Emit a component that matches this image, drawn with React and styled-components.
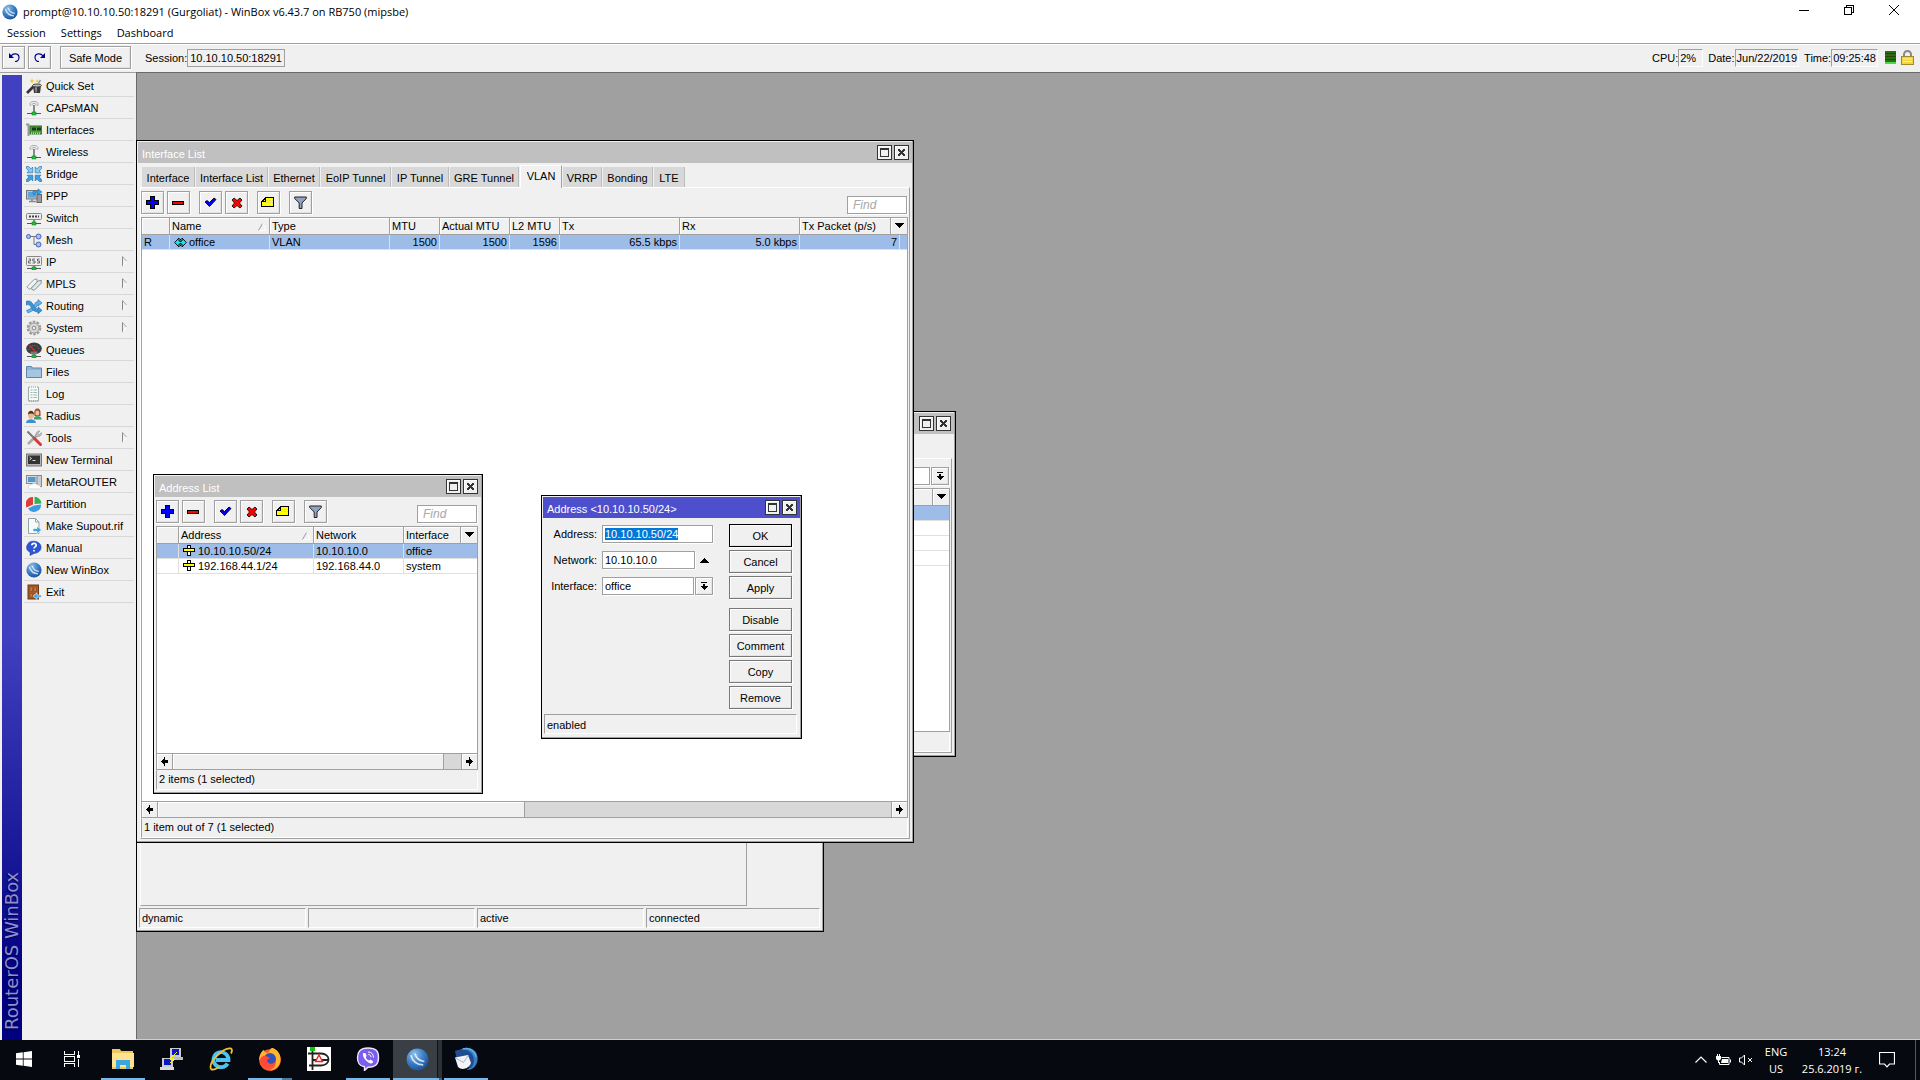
import React, { useEffect, useRef } from "react";
import styled, { createGlobalStyle, css } from "styled-components";

const ui = '"Liberation Sans", Arial, sans-serif';
const shell = '"Open Sans", "Segoe UI", sans-serif';
const c = {
  face: "#f0f0f0",
  edge: "#a0a0a0",
  grid: "#e0e0e0",
  select: "#9dbde8",
  tab: "#d8d8d8",
  desk: "#a0a0a0",
};

const Global = createGlobalStyle`
  *, *::before, *::after { box-sizing: border-box; }
  body { margin: 0; background: ${c.face}; overflow: hidden; }
  button, input, select { font: inherit; color: inherit; margin: 0; border-radius: 0; }
  button { background: none; border: 0; padding: 0; cursor: default; }
  svg { display: block; flex: none; }
  ::selection { background: #0078d7; color: #fff; }
`;

const Screen = styled.div`
  display: flex;
  flex-direction: column;
  height: 100vh;
  font: 11px/14px ${ui};
  color: #000;
  background: ${c.face};
  user-select: none;
`;

/* ---------- application frame ---------- */

const AppTitle = styled.header`
  display: flex;
  align-items: center;
  height: 23px;
  padding: 0 4px 0 2px;
  background: #fff;
  font: 11px/16px ${shell};
`;
const AppName = styled.h1`
  flex: 1;
  margin: 0 0 0 5px;
  font: inherit;
`;
const WinControl = styled.button`
  display: flex;
  align-items: center;
  justify-content: center;
  align-self: flex-start;
  width: 45px;
  height: 20px;
`;
const MenuBar = styled.nav`
  display: flex;
  gap: 15px;
  height: 21px;
  padding: 0 7px;
  background: #fff;
  border-bottom: 1px solid ${c.edge};
  font: 11px/20px ${shell};
`;
const bevel = css`
  background: ${c.face};
  border: 1px solid ${c.edge};
  box-shadow: 1px 1px 0 #fff, inset 1px 1px 0 #fff, inset -1px -1px 0 #e3e3e3;
`;
const MainBar = styled.div`
  display: flex;
  align-items: center;
  height: 28px;
  padding: 0 6px 2px 2px;
  border-top: 1px solid #fff;
`;
const Tool = styled.button`
  ${bevel}
  display: flex;
  align-items: center;
  justify-content: center;
  flex: none;
  width: 23px;
  height: 23px;
  margin-right: ${(p) => (p.$wide ? 9 : 3)}px;
`;
const TextTool = styled(Tool)`
  width: 71px;
  margin-right: 14px;
`;
const Readout = styled.output`
  height: 18px;
  padding: 0 ${(p) => (p.$boxed ? 2 : 1)}px;
  min-width: ${(p) => p.$min || 0}px;
  margin-right: ${(p) => (p.$boxed ? 0 : 5)}px;
  line-height: 17px;
  border: 1px solid ${c.edge};
  border-right-color: ${(p) => (p.$boxed ? c.edge : "#fff")};
  border-bottom-color: ${(p) => (p.$boxed ? c.edge : "#fff")};
`;
const Spacer = styled.div`
  flex: 1;
`;
const LoadMeter = styled.div`
  width: 11px;
  height: 13px;
  margin: 0 5px 0 2px;
  background: repeating-linear-gradient(#2d6b12 0 2px, #1f4a0c 2px 3px);
  border-bottom: 2px solid #3fe03f;
`;
const Work = styled.div`
  display: flex;
  flex: 1;
  min-height: 0;
`;
const Side = styled.aside`
  display: flex;
  width: 136px;
  padding: 2px 2px 0;
  border-top: 1px solid ${c.edge};
`;
const Brand = styled.div`
  width: 20px;
  padding-top: 10px;
  color: #8f8fca;
  font: 18px/20px "DejaVu Sans", Verdana, sans-serif;
  text-shadow: -1px -1px 1px #00004c;
  white-space: nowrap;
  writing-mode: vertical-rl;
  transform: rotate(180deg);
  background: linear-gradient(#000080 6%, #4040c0 42%);
`;
const SideMenu = styled.nav`
  flex: 1;
  padding-left: 2px;
`;
const SideItem = styled.button`
  display: flex;
  align-items: center;
  gap: 4px;
  width: 100%;
  height: 22px;
  padding: 0 6px 0 2px;
  border-bottom: 1px solid #d8d8d8;
  text-align: left;
  span { flex: 1; }
`;
const Desk = styled.main`
  position: relative;
  flex: 1;
  overflow: hidden;
  background: ${c.desk};
  border-bottom: 1px solid #d0d0d0;
  box-shadow: inset 1px 1px 0 #696969;
`;

/* ---------- inner windows ---------- */

const Win = styled.section`
  position: absolute;
  left: ${(p) => p.$x}px;
  top: ${(p) => p.$y}px;
  width: ${(p) => p.$w}px;
  height: ${(p) => p.$h}px;
  display: flex;
  flex-direction: column;
  padding: 1px;
  border: 1px solid #000;
  background: ${c.face};
  box-shadow: inset -1px -1px 0 ${c.edge};
`;
const WinTitle = styled.div`
  display: flex;
  align-items: center;
  gap: 2px;
  height: 21px;
  flex: none;
  padding: 0 3px 0 4px;
  background: ${(p) => (p.$active ? "#4d4fcc" : "#c0c0c0")};
  color: #fff;
  h2 { flex: 1; margin: 0; font: inherit; padding-top: 2px; }
`;
const Caption = styled.button`
  display: flex;
  align-items: center;
  justify-content: center;
  width: 15px;
  height: 15px;
  background: ${c.face};
  border: 1px solid #333;
  box-shadow: inset 1px 1px 0 #fff;
`;
const Body = styled.div`
  display: flex;
  flex-direction: column;
  flex: 1;
  min-height: 0;
  margin: ${(p) => (p.$plain ? "0 3px 2px 1px" : "0 2px 2px")};
`;
const Tabs = styled.div`
  display: flex;
  align-items: flex-end;
  gap: 1px;
  flex: none;
  height: 24px;
  padding-left: 2px;
`;
const Tab = styled.button`
  width: ${(p) => p.$w}px;
  height: 20px;
  padding-top: 2px;
  background: ${c.tab};
  border-right: 1px solid #bcbcbc;
  white-space: nowrap;
  &[aria-selected="true"] {
    position: relative;
    height: 23px;
    margin-bottom: -1px;
    padding: 0 0 2px;
    background: ${c.face};
    border: 1px solid #fff;
    border-right-color: ${c.edge};
    border-bottom: 0;
  }
`;
const Panel = styled.div`
  display: flex;
  flex-direction: column;
  flex: 1;
  min-height: 0;
  padding-right: 1px;
  border: 1px solid #fff;
  border-right-color: ${c.edge};
  border-bottom-color: ${c.edge};
`;
const Strip = styled.div`
  display: flex;
  flex: none;
  height: 29px;
  padding: 3px 1px 3px 0;
  align-items: flex-end;
`;
const field = css`
  height: 18px;
  padding: 0 2px;
  background: #fff;
  border: 1px solid ${c.edge};
  box-shadow: 1px 1px 0 #fff;
  outline: 0;
  appearance: none;
`;
const Find = styled.input`
  ${field}
  width: 60px;
  padding-left: 5px;
  font-size: 12px;
  &::placeholder { color: #a8a8a8; font-style: italic; opacity: 1; }
`;
const ListBox = styled.div`
  position: relative;
  flex: 1;
  min-height: 0;
  overflow: hidden;
  background: #fff;
  border: 1px solid ${c.edge};
  border-bottom-width: ${(p) => (p.$closed ? 1 : 0)}px;
`;
const ColumnPicker = styled.button`
  position: absolute;
  top: 0;
  right: 0;
  display: flex;
  align-items: center;
  justify-content: center;
  width: 17px;
  height: 17px;
  background: ${c.face};
  border-left: 1px solid ${c.edge};
  border-bottom: 1px solid ${c.edge};
  box-shadow: inset 1px 1px 0 #fff;
`;
const Grid = styled.table`
  width: 100%;
  table-layout: fixed;
  border-collapse: separate;
  border-spacing: 0;
  th, td { padding: 0 2px; overflow: hidden; white-space: nowrap; }
  th {
    height: 17px;
    padding-top: 1px;
    font-weight: 400;
    line-height: 15px;
    text-align: left;
    background: ${c.face};
    border-right: 1px solid ${c.edge};
    border-bottom: 1px solid ${c.edge};
    box-shadow: inset 1px 1px 0 #fff;
  }
  td {
    height: 15px;
    line-height: 14px;
    border-right: 1px solid ${c.grid};
    border-bottom: 1px solid ${c.grid};
  }
  th:last-child, td:last-child { border-right: 0; }
`;
const Row = styled.tr`
  background: ${(p) => (p.$selected ? c.select : "#fff")};
`;
const Num = styled.td`
  text-align: right;
`;
const SortLabel = styled.span`
  display: flex;
  align-items: center;
  justify-content: space-between;
`;
const Entry = styled.span`
  display: flex;
  align-items: center;
  gap: 2px;
  padding-left: 2px;
`;
const HScroll = styled.div`
  display: flex;
  flex: none;
  height: 17px;
  border: 1px solid ${c.edge};
  background: ${c.tab};
`;
const ScrollEnd = styled.button`
  display: flex;
  align-items: center;
  justify-content: center;
  width: 15px;
  background: ${c.face};
  box-shadow: inset 1px 1px 0 #fff;
`;
const ScrollTrack = styled.div`
  display: flex;
  flex: 1;
  border: solid ${c.edge};
  border-width: 0 1px;
`;
const Thumb = styled.div`
  width: ${(p) => p.$size}%;
  background: ${c.face};
  border-right: 1px solid ${c.edge};
  box-shadow: inset 1px 1px 0 #fff;
`;
const Status = styled.div`
  height: 20px;
  padding-left: 2px;
  line-height: ${(p) => (p.$flat ? 16 : 18)}px;
  border: 1px solid ${(p) => (p.$flat ? c.face : c.edge)};
  border-left-color: ${c.edge};
  border-right-color: #fff;
  border-bottom-color: #fff;
`;
const StatusRow = styled.div`
  display: grid;
  grid-template-columns: 167px 167px 167px 1fr;
  gap: 2px;
  flex: none;
  margin: 0 2px 2px 1px;
`;
const GatewayPane = styled.div`
  flex: 1;
  margin: 0 75px 2px 2px;
  border: 1px solid #fff;
  border-right-color: ${c.edge};
  border-bottom-color: ${c.edge};
`;
const Filter = styled.input`
  ${field}
  flex: 1;
  min-width: 0;
`;
const DropGlyph = styled.span`
  ${bevel}
  display: flex;
  align-items: center;
  justify-content: center;
  flex: none;
  width: 18px;
  height: 18px;
  margin-left: 1px;
`;

/* ---------- address dialog ---------- */

const DialogBody = styled.form`
  display: flex;
  flex: 1;
  justify-content: space-between;
  padding: 6px 8px 0 0;
`;
const Fields = styled.div`
  display: flex;
  flex-direction: column;
  gap: 8px;
  width: 170px;
  padding-top: 1px;
`;
const Field = styled.div`
  display: flex;
  align-items: center;
  label { width: 54px; margin-right: 5px; text-align: right; white-space: nowrap; }
`;
const TextBox = styled.input`
  ${field}
  flex: 1;
  min-width: 0;
`;
const Choice = styled.select`
  ${field}
  flex: 1;
  min-width: 0;
`;
const Toggle = styled.button`
  display: flex;
  justify-content: center;
  width: 18px;
`;
const Actions = styled.div`
  display: flex;
  flex-direction: column;
  gap: 9px;
`;
const Group = styled.div`
  display: flex;
  flex-direction: column;
  gap: 3px;
`;
const Action = styled.button`
  ${bevel}
  width: 63px;
  height: 23px;
  border-color: ${(p) => (p.$default ? "#000" : "#787878")};
`;
const DialogStatus = styled(Status)`
  margin: 0 3px 3px 1px;
  line-height: 20px;
`;

/* ---------- taskbar ---------- */

const Taskbar = styled.footer`
  display: flex;
  align-items: center;
  flex: none;
  height: 40px;
  padding-right: 4px;
  background: #060a10;
  color: #fff;
  font: 11px/17px ${shell};
`;
const TaskButton = styled.button`
  display: flex;
  align-items: center;
  justify-content: center;
  width: ${(p) => (p.$system ? 48 : 49)}px;
  height: 40px;
  background: ${(p) => (p.$focused ? "linear-gradient(90deg, #3a3f45 44px, #0e141b 44px 45px, #2c3136 45px)" : "none")};
  border-bottom: 2px solid transparent;
  border-image: ${(p) =>
    p.$focused
      ? "linear-gradient(90deg, #76b9ed 44px, #3c607d 44px) 2"
      : p.$stack
      ? "linear-gradient(90deg, transparent 4px, #76b9ed 4px 35px, #4d7ba0 35px 44px, transparent 44px) 2"
      : p.$open
      ? "linear-gradient(90deg, transparent 4px, #76b9ed 4px 44px, transparent 44px) 2"
      : "none"};
  padding-right: ${(p) => (p.$system ? 0 : 1)}px;
`;
const TaskGap = styled.div`
  width: 3px;
`;
const Tray = styled.div`
  display: flex;
  align-items: center;
  gap: 8px;
  margin-right: ${(p) => (p.$end ? 0 : 14)}px;
`;
const TrayText = styled.div`
  width: ${(p) => p.$w}px;
  text-align: center;
  white-space: nowrap;
`;
const ShowDesk = styled.button`
  width: 1px;
  height: 40px;
  margin-left: 12px;
  background: #54585c;
`;

/* ---------- drawings ---------- */

const Svg = ({ s = 16, w, h, crisp, children, vb }) => (
  <svg width={w || s} height={h || s} viewBox={vb || `0 0 ${w || s} ${h || s}`} shapeRendering={crisp ? "crispEdges" : "auto"} aria-hidden="true">
    {children}
  </svg>
);

const WinboxLogo = ({ s = 16 }) => (
  <Svg s={s} vb="0 0 16 16">
    <defs>
      <radialGradient id={`orb${s}`} cx="35%" cy="25%" r="85%">
        <stop offset="0" stopColor="#8cc0ec" />
        <stop offset=".5" stopColor="#3d7fc6" />
        <stop offset="1" stopColor="#164a90" />
      </radialGradient>
    </defs>
    <circle cx="8" cy="8" r="7.6" fill={`url(#orb${s})`} />
    <path d="M3.400 5C4.500 9 7.800 11.600 12 11.800M6.200 3.800C7 7 9.500 9 12.800 9.400" fill="none" stroke="#fff" strokeWidth="1.200" opacity=".75" />
  </Svg>
);

const Node = ({ y = 14 }) => (
  <g>
    <path d={`M1 ${y}.5h14`} stroke="#555" />
    <rect x="6" y={y - 1} width="4" height="3" fill="#1fbf3a" stroke="#0b7a1f" strokeWidth=".5" />
  </g>
);

const Antenna = () => (
  <Svg>
    <path d="M4.500 6C3 3 5 1.500 8 1.500S13 3 11.500 6M6.200 5.500C5.600 4 6.500 3.500 8 3.500s2.400.5 1.800 2" fill="none" stroke="#aaa" />
    <path d="M8 5v9" stroke="#8a8a8a" strokeWidth="2" />
    <Node y={13} />
  </Svg>
);

const icons = {
  quick: (
    <Svg>
      <path d="M1 15L9 7" stroke="#333" strokeWidth="2.600" />
      <path d="M7 8h8l-1 7H8z" fill="#3b3b3b" />
      <path d="M9 9h2l-.3 5.500H9.600z" fill="#999" />
      <ellipse cx="11" cy="7.500" rx="4.500" ry="1.500" fill="#bbb" stroke="#444" />
      <path d="M6 .5l.8 1.700 1.700.8-1.700.8L6 5.500l-.8-1.700L3.500 3l1.700-.8zM11 1l.5 1.500L13 3l-1.500.5L11 5l-.5-1.500L9 3l1.500-.5z" fill="#f5c52e" />
      <path d="M12 6l2.500-4" stroke="#999" strokeWidth="1.500" />
    </Svg>
  ),
  antenna: <Antenna />,
  card: (
    <Svg>
      <path d="M0 2.500h2.500V14" fill="none" stroke="#999" strokeWidth="2" />
      <rect x="4" y="4" width="12" height="8" fill="#4d9e3f" stroke="#2c6e22" />
      <path d="M6 5.500h4v3H6zM11 5.500h4v3h-4z" fill="#1d3a18" />
      <path d="M5 11.500h10" stroke="#e3d25a" strokeWidth="2" strokeDasharray="1 1" />
    </Svg>
  ),
  bridge: (
    <Svg>
      {[0, 90, 180, 270].map((a) => (
        <path key={a} transform={`rotate(${a} 8 8)`} d="M.5 2.500V.5H2.500L5 2.800 6.800 1V6.800H1L2.800 5z" fill={a < 180 ? "#86caf2" : "#3d9ee0"} stroke="#2673b0" strokeWidth=".7" />
      ))}
    </Svg>
  ),
  ppp: (
    <Svg>
      <rect x=".5" y="2.500" width="11" height="8.500" fill="#bfc4c8" stroke="#777" />
      <rect x="2" y="4" width="8" height="5.500" fill="#5ea4da" />
      <path d="M3 13.500h7M6 11v2" stroke="#888" strokeWidth="1.500" />
      <rect x="11" y="6.500" width="4.500" height="8" fill="#9a9a9a" stroke="#666" />
      <path d="M7 6V3h5V.8L16 4l-4 3V5H9v2z" fill="#3aa0e6" stroke="#1d6fab" strokeWidth=".5" />
    </Svg>
  ),
  switch: (
    <Svg>
      <rect x=".5" y="3.500" width="15" height="6" rx="1" fill="#ececec" stroke="#888" />
      <path d="M3 6.500h10" stroke="#444" strokeWidth="2" strokeDasharray="2 1" />
      <path d="M8 10v4" stroke="#888" strokeWidth="2" />
      <Node y={13} />
    </Svg>
  ),
  mesh: (
    <Svg>
      <path d="M4 4.500h8M8 4.500v8h4" fill="none" stroke="#777" />
      {[[2.500, 4.500, 2], [12.500, 4.500, 2.500], [12.500, 12.500, 2.500]].map(([x, y, r], i) => (
        <circle key={i} cx={x} cy={y} r={r} fill="#a9bdf2" stroke="#4661c4" />
      ))}
    </Svg>
  ),
  ip: (
    <Svg>
      <rect x=".5" y="2.500" width="15" height="9" rx="1" fill="#efefef" stroke="#888" />
      <path d="M2.500 5h2v2h-2v2h2.500M9 5H6.800v2H9v2H6.500M13.500 5h-2v2h2v2H11" fill="none" stroke="#666" />
      <path d="M8 12v2" stroke="#888" strokeWidth="2" />
      <Node y={14} />
    </Svg>
  ),
  mpls: (
    <Svg>
      <path d="M.8 11L8 3.500l3-.5v3L4 13.500z" fill="#eef3f3" stroke="#90a0a0" />
      <path d="M5 12.500L12 5l3.300-.7-.3 3.200L8 14.500z" fill="#dfe8e8" stroke="#819292" />
    </Svg>
  ),
  routing: (
    <Svg>
      <path d="M.5 12.500L6 10l4-6h2V1.500L16 5l-4 3V6.500L8 12l-6 3z" fill="#63b2e8" stroke="#2f83bf" strokeWidth=".7" />
      <path d="M0 3.500C4 2 6 4 8 8c1.200 2 2 3 4 3V8.800l4 3.600-4 3.300V14c-4 0-6-3-7-5S3 6 0 7z" fill="#3d93d6" stroke="#2673b0" strokeWidth=".7" />
    </Svg>
  ),
  gear: (
    <Svg>
      <circle cx="8" cy="8" r="6.300" fill="none" stroke="#9a9a9a" strokeWidth="2" strokeDasharray="2.600 1.350" />
      <circle cx="8" cy="8" r="5" fill="#d8d8d8" stroke="#999" />
      <circle cx="8" cy="8" r="1.800" fill="#f2f2f2" stroke="#888" />
    </Svg>
  ),
  gauge: (
    <Svg>
      <ellipse cx="8" cy="6.500" rx="7.800" ry="6" fill="#3c3c3c" />
      <path d="M3 8a5 4.500 0 0110 0" fill="none" stroke="#888" strokeDasharray="1 1.500" />
      <path d="M3.500 3.500L9 9" stroke="#e02a2a" strokeWidth="1.300" />
      <rect x="4.500" y="9.500" width="7" height="2.500" fill="#777" />
      <path d="M8 12v2" stroke="#888" strokeWidth="2" />
      <Node y={14} />
    </Svg>
  ),
  folder: (
    <Svg>
      <path d="M.5 13.500v-11h5l1 1.500h9v9.500z" fill="#8db4d6" stroke="#5c87ad" />
      <path d="M1 6h14v7H1z" fill="#a5c6e0" />
    </Svg>
  ),
  log: (
    <Svg>
      <path d="M2.500 1v14h10V1" fill="#f6faf8" stroke="#9aada6" />
      <path d="M3 1h10M3 15h10" stroke="#8a9c96" strokeDasharray="1 1" />
      <path d="M4.500 4h2M4.500 6.500h2M4.500 9h2M4.500 11.500h2M7.500 4h3.500M7.500 6.500h3.500M7.500 9h3.500M7.500 11.500h3.500" stroke="#9db7b5" />
    </Svg>
  ),
  people: (
    <Svg>
      <path d="M8 10c0-3 7.500-3 7.800 1.500H8z" fill="#3f9c6b" />
      <path d="M8.500 8c-1-6 1-7.500 3-7.500S15 2 14.500 8z" fill="#a4502c" />
      <ellipse cx="11.300" cy="5" rx="2" ry="2.600" fill="#f0c49a" />
      <path d="M0 15c0-5 9.500-5 10 0z" fill="#3e8ed6" />
      <ellipse cx="5" cy="7" rx="3" ry="3.800" fill="#eab98a" />
      <path d="M2 6.500C2 1.500 8 1.500 8 6.500 6 5 4 5 2 6.500z" fill="#4b3320" />
    </Svg>
  ),
  tools: (
    <Svg>
      <path d="M2 14L11 5" stroke="#aaa" strokeWidth="2.600" />
      <path d="M10 6.500C9 3 11.500.5 14 1l-2 2.300 1.300 1.300L15.500 2.500C16 5.500 13 7.500 10 6.500z" fill="#bbb" stroke="#888" strokeWidth=".5" />
      <path d="M1.500 1.500L9 9" stroke="#777" strokeWidth="2" />
      <path d="M8.500 8.500L14.500 14.500" stroke="#d83a3a" strokeWidth="3" strokeLinecap="round" />
    </Svg>
  ),
  terminal: (
    <Svg>
      <rect x=".5" y="2" width="15" height="12" fill="#b5b5b5" stroke="#777" />
      <rect x="2" y="3.500" width="12" height="8.500" fill="#333" />
      <path d="M3.500 5l2 1.500-2 1.500M6.500 8.500h3" fill="none" stroke="#ddd" />
    </Svg>
  ),
  meta: (
    <Svg>
      <rect x="10" y="1.500" width="5.500" height="11" fill="#ccc" stroke="#888" />
      <rect x=".5" y="1.500" width="10.500" height="8" fill="#d5dade" stroke="#889" />
      <rect x="2" y="3" width="7.500" height="5" fill="#4e98d4" />
      <path d="M3.500 15c-2.500-2.500 0-4.500 2-4 1-2.500 5-2.500 5.500 0 4-.5 4.500 4 2 4z" fill="#fff" stroke="#b9c5d0" strokeWidth=".6" />
    </Svg>
  ),
  pie: (
    <Svg>
      <path d="M7 1A7 7 0 00.600 11.500L7 8.500z" fill="#e03b3b" />
      <path d="M8.500.8A7.300 7.300 0 0115.500 7.500l-7 .5z" fill="#35b257" />
      <path d="M8 9.500L2 12.500a7 7 0 0013-4z" fill="#3d9be0" />
    </Svg>
  ),
  supout: (
    <Svg>
      <path d="M2.500.5h7l3.500 3.500v11.500H2.500z" fill="#f7fafa" stroke="#91a5a5" />
      <path d="M9.500.5V4H13" fill="none" stroke="#91a5a5" />
      <path d="M7 10.500h4V8l4.500 4-4.500 3.700V13.500H7z" fill="#3ea3e6" stroke="#fff" strokeWidth=".6" />
    </Svg>
  ),
  help: (
    <Svg>
      <path d="M8 1.200a7 6 0 110 12.200l-4 2 .2-3A7 6 0 018 1.200z" fill="#2d55d4" stroke="#1b3a9e" strokeWidth=".6" />
      <path d="M5.800 5.200C6 2.800 10.400 2.800 10.200 5.300 10 7 8 6.800 8 8.600M8 9.900v1.600" fill="none" stroke="#fff" strokeWidth="1.700" />
    </Svg>
  ),
  winbox: <WinboxLogo />,
  exit: (
    <Svg>
      <rect x="2" y="1" width="10.500" height="14" fill="#a85a28" stroke="#6f3712" />
      <path d="M4 3h2.500v4.500H4zM8 3h2.500v4.500H8zM4 9.500h2.500V13H4zM8 9.500h2.500V13H8z" fill="#c27a44" stroke="#80441b" strokeWidth=".5" />
      <path d="M15.500 11H11V8.800L7 12l4 3.500V13.300h4.500z" fill="#4aa8e8" stroke="#fff" strokeWidth=".5" />
    </Svg>
  ),
};

const Plus = () => (
  <Svg s={13} crisp>
    <path d="M4 0h5v4h4v5H9v4H4V9H0V4h4z" fill="#000" />
    <path d="M5 1h3v4h4v3H8v4H5V8H1V5h4z" fill="#0000ff" />
  </Svg>
);
const Minus = () => (
  <Svg w={13} h={13} crisp>
    <path d="M0 5h12v4H0z" fill="#000" />
    <path d="M1 6h10v2H1z" fill="#f00" />
  </Svg>
);
const Check = () => (
  <Svg w={13} h={11}>
    <path d="M1 5l2-1.500 2.500 2L10 1l2 1.500L5.500 9.500z" fill="#00f" stroke="#000" strokeWidth=".9" />
  </Svg>
);
const Cross = () => (
  <Svg s={12}>
    <path d="M1 3l2-2 3 2.500L9 1l2 2-2.500 3L11 9l-2 2-3-2.500L3 11 1 9l2.500-3z" fill="#f00" stroke="#000" strokeWidth=".8" />
  </Svg>
);
const Note = () => (
  <Svg w={15} h={11} crisp>
    <path d="M4 1h9v9H1V4h2V2h1z" fill="#ffff00" />
    <path d="M4.500.5h8v9H.5v-5h4zM4.500 1.500h-1v1h-1v1h-1v1" fill="none" stroke="#000" />
    <path d="M5 3h7M5 5h7" stroke="#dede70" strokeDasharray="2 1" />
  </Svg>
);
const Funnel = () => (
  <Svg w={13} h={14}>
    <path d="M.7 1h11.600v1.500L8 7v5.500H5.200V7L.7 2.500z" fill="#8fa3c4" stroke="#222" />
  </Svg>
);
const Down = () => (
  <Svg w={10} h={6} crisp>
    <path d="M0 0h10L5 5z" fill="#000" />
  </Svg>
);
const Up = () => (
  <Svg w={10} h={5} crisp>
    <path d="M0 5h10L5 0z" fill="#000" />
  </Svg>
);
const Drop = () => (
  <Svg w={8} h={8} crisp>
    <path d="M1 0h6v1H1zM3 2h2v2h3L4 8 0 4h3z" fill="#000" />
  </Svg>
);
const Arrow = ({ flip }) => (
  <Svg w={7} h={9} crisp>
    <path transform={flip ? "translate(7 0) scale(-1 1)" : undefined} d="M0 4h1V3h1V2h1V0h1v3h3v3H4v3H3V7H2V6H1V5H0z" fill="#000" />
  </Svg>
);
const Sort = () => (
  <Svg w={9} h={8}>
    <path d="M.5 7.500L4.500.5" stroke="#999" fill="none" />
    <path d="M5 .5l3 7H1" stroke="#fff" fill="none" />
  </Svg>
);
const Sub = () => (
  <Svg w={8} h={11}>
    <path d="M2.500 10.500v-10" stroke="#888" />
    <path d="M2.500.5l4 4.500" stroke="#aaa" />
    <path d="M6.500 5.500l-4 5" stroke="#fff" />
  </Svg>
);
const VlanIcon = () => (
  <Svg w={13} h={11}>
    <path d="M.6 5.500L5 1v3h3V1l4.400 4.500L8 10V7H5v3z" fill="#20e0e8" stroke="#000" strokeWidth=".9" />
    <path d="M6.500 2v7" stroke="#000" strokeDasharray="1 1" />
  </Svg>
);
const AddressIcon = () => (
  <Svg w={13} h={12} crisp>
    <path d="M4.500.5h3v10h-3z" fill="#fff" stroke="#000" />
    <path d="M.5 3.500h11v3H.5z" fill="#ff0" stroke="#000" />
  </Svg>
);

const Captions = () => (
  <>
    <Caption aria-label="Maximize">
      <Svg s={9} crisp>
        <path d="M0 0h9v9H0zM1 2v6h7V2z" fill="#333" fillRule="evenodd" />
      </Svg>
    </Caption>
    <Caption aria-label="Close">
      <Svg w={7} h={7} crisp>
        <path d="M0 0h2v1h1v1h1V1h1V0h2v2H6v1H5v1h1v1h1v2H5V6H4V5H3v1H2v1H0V5h1V4h1V3H1V2H0z" fill="#333" />
      </Svg>
    </Caption>
  </>
);

const ListTools = () => (
  <Strip>
    <Tool aria-label="Add"><Plus /></Tool>
    <Tool $wide aria-label="Remove"><Minus /></Tool>
    <Tool aria-label="Enable"><Check /></Tool>
    <Tool $wide aria-label="Disable"><Cross /></Tool>
    <Tool $wide aria-label="Comment"><Note /></Tool>
    <Tool aria-label="Filter"><Funnel /></Tool>
    <Spacer />
    <Find placeholder="Find" aria-label="Find" />
  </Strip>
);

const ScrollBar = ({ size }) => (
  <HScroll>
    <ScrollEnd aria-label="Scroll left"><Arrow /></ScrollEnd>
    <ScrollTrack><Thumb $size={size} /></ScrollTrack>
    <ScrollEnd aria-label="Scroll right"><Arrow flip /></ScrollEnd>
  </HScroll>
);

const Head = ({ cols, sorted }) => (
  <>
    <colgroup>
      {cols.map(([, w], i) => <col key={i} width={w} />)}
    </colgroup>
    <thead>
      <tr>
        {cols.map(([name], i) => (
          <th key={i} scope="col">
            {sorted && name === sorted ? <SortLabel>{name}<Sort /></SortLabel> : name}
          </th>
        ))}
      </tr>
    </thead>
  </>
);

/* ---------- data ---------- */

const menu = [
  ["Quick Set", "quick"], ["CAPsMAN", "antenna"], ["Interfaces", "card"], ["Wireless", "antenna"],
  ["Bridge", "bridge"], ["PPP", "ppp"], ["Switch", "switch"], ["Mesh", "mesh"], ["IP", "ip", true],
  ["MPLS", "mpls", true], ["Routing", "routing", true], ["System", "gear", true], ["Queues", "gauge"],
  ["Files", "folder"], ["Log", "log"], ["Radius", "people"], ["Tools", "tools", true],
  ["New Terminal", "terminal"], ["MetaROUTER", "meta"], ["Partition", "pie"],
  ["Make Supout.rif", "supout"], ["Manual", "help"], ["New WinBox", "winbox"], ["Exit", "exit"],
];
const tabs = [
  ["Interface", 53], ["Interface List", 72], ["Ethernet", 51], ["EoIP Tunnel", 70], ["IP Tunnel", 57],
  ["GRE Tunnel", 69], ["VLAN", 42], ["VRRP", 39], ["Bonding", 50], ["LTE", 31],
];
const ifaceCols = [["", 28], ["Name", 100], ["Type", 120], ["MTU", 50], ["Actual MTU", 70], ["L2 MTU", 50], ["Tx", 120], ["Rx", 120], ["Tx Packet (p/s)", 100], ["", undefined]];
const addrCols = [["", 22], ["Address", 135], ["Network", 90], ["Interface", undefined]];
const addresses = [
  ["10.10.10.50/24", "10.10.10.0", "office"],
  ["192.168.44.1/24", "192.168.44.0", "system"],
];

/* ---------- taskbar drawings ---------- */

const apps = [
  ["File Explorer", { $open: true }, (
    <Svg s={24}>
      <path d="M1 2h8l1 2h12v18H1z" fill="#f0c75a" />
      <path d="M1 6h22v14H1z" fill="#ffe292" />
      <path d="M5 22v-9h14v9h-4v-4H9v4z" fill="#3ba7df" />
    </Svg>
  )],
  ["PuTTY", {}, (
    <Svg s={24} crisp>
      <path d="M10 1h11v9H10z" fill="#ccc" /><path d="M12 2h7v6h-7z" fill="#0a17c8" />
      <path d="M11 10h12v3H11z" fill="#bbb" />
      <path d="M2 11h11v9H2z" fill="#ccc" /><path d="M4 12h7v6H4z" fill="#0a17c8" />
      <path d="M0 20h14v3H0z" fill="#d8d8d8" />
      <path d="M17 5l-9 7 4 1-5 5 9-6-4-1z" fill="#ffee22" />
    </Svg>
  )],
  ["Internet Explorer", {}, (
    <Svg s={24}>
      <path d="M18.500 16.500A7.500 7.500 0 1119.500 13H7" fill="none" stroke="#4cc3f1" strokeWidth="3.800" />
      <path d="M2 22C-1 16 14 0 22 1.500c1.500.5 1 3 0 5M2 22c1.500 1.500 5 0 8-2" fill="none" stroke="#f5c12e" strokeWidth="1.800" />
    </Svg>
  )],
  ["Firefox", { $stack: true }, (
    <Svg s={24}>
      <circle cx="12" cy="13" r="10.800" fill="#ff5a2c" />
      <path d="M1.200 13C1 8 4 3.500 6 3c0 2 2 3 4 3 3-4 2-5 5-5 5 2 8 7 7.500 12-.5 6-5 10-11 10.800 6-3 8-8 5-12z" fill="#ffb52c" />
      <circle cx="12" cy="12" r="6" fill="#3252b8" />
      <path d="M2 12c2-3 5-4 7-2.500L12 11l-3 2c0 4 5 5 8 2-1 5-6 7-10 5.500C4 19 2 16 2 12z" fill="#ff4a3a" />
    </Svg>
  )],
  ["Circuit Designer", {}, (
    <Svg s={24}>
      <path d="M0 0h24v24H0z" fill="#fff" />
      <path d="M5.500 4v19M1 6.500h13c10 0 10 12 0 12H2M5 13h16" fill="none" stroke="#222" strokeWidth="1.800" />
      <path d="M12 8l3.500 6.500h-7z" fill="#fff" stroke="#e22" strokeWidth="1.400" />
      <path d="M3 0h5v4H3z" fill="#12c312" />
    </Svg>
  )],
  ["Viber", { $open: true }, (
    <Svg s={24}>
      <path d="M12 1c8 0 10.500 3 10.500 9.500S20 20 12 20.200L8.500 23.500V19.800C3 19 1.500 16 1.500 10.500S4 1 12 1z" fill="#7d5cf0" stroke="#eee9ff" strokeWidth="1.400" />
      <path d="M7.500 6c-2 1.500 1 8 7 10.500 1.500.5 3-1.500 2.500-2.300L14.500 12.500l-1.500 1c-1.500-.5-3-2-3.300-3.500l1-1.200L9.300 6z" fill="#fff" />
      <path d="M12 5c3.500 0 5.500 2.300 5.500 5.500M12.300 7.500c1.700 0 2.700 1.200 2.700 2.800" fill="none" stroke="#fff" />
    </Svg>
  )],
  ["WinBox", { $focused: true }, <WinboxLogo s={23} />],
  ["Thunderbird", { $open: true }, (
    <Svg s={24}>
      <path d="M5 4C10-1.500 22 0 23.500 10c1 8-5 13.500-11 13C18 20 20 14 16 9z" fill="#3a7fc8" />
      <path d="M1 4c3-1 9-3 15 1 5 4 5 12 1 16L3 14z" fill="#1f4d8f" />
      <path d="M1 10.500l13-2.500 3 8c-3 7-10 7-13 4z" fill="#f2f4f7" />
      <path d="M1.500 11l8 4.500L14 8.500" fill="none" stroke="#a9b4c4" />
      <path d="M9 2c6-1.500 12 1.500 13 8" fill="none" stroke="#5fb0e8" strokeWidth="1.500" />
    </Svg>
  )],
];

/* ---------- screens ---------- */

const InterfaceWindow = () => (
  <Win $x={0} $y={68} $w={778} $h={703}>
    <WinTitle><h2>Interface List</h2><Captions /></WinTitle>
    <Body>
      <Tabs role="tablist">
        {tabs.map(([name, w]) => <Tab key={name} role="tab" $w={w} aria-selected={name === "VLAN"}>{name}</Tab>)}
      </Tabs>
      <Panel>
        <ListTools />
        <ListBox>
          <Grid>
            <Head cols={ifaceCols} sorted="Name" />
            <tbody>
              <Row $selected>
                <td>R</td>
                <td><Entry><VlanIcon />office</Entry></td>
                <td>VLAN</td>
                <Num>1500</Num><Num>1500</Num><Num>1596</Num>
                <Num>65.5 kbps</Num><Num>5.0 kbps</Num><Num>7</Num><td />
              </Row>
            </tbody>
          </Grid>
          <ColumnPicker aria-label="Columns"><Down /></ColumnPicker>
        </ListBox>
        <ScrollBar size={50} />
        <Status $flat>1 item out of 7 (1 selected)</Status>
      </Panel>
    </Body>
  </Win>
);

const AddressListWindow = () => (
  <Win $x={17} $y={402} $w={330} $h={320}>
    <WinTitle><h2>Address List</h2><Captions /></WinTitle>
    <Body $plain>
      <ListTools />
      <ListBox>
        <Grid>
          <Head cols={addrCols} sorted="Address" />
          <tbody>
            {addresses.map(([address, network, iface], i) => (
              <Row key={address} $selected={i === 0}>
                <td />
                <td><Entry><AddressIcon />{address}</Entry></td>
                <td>{network}</td>
                <td>{iface}</td>
              </Row>
            ))}
          </tbody>
        </Grid>
        <ColumnPicker aria-label="Columns"><Down /></ColumnPicker>
      </ListBox>
      <ScrollBar size={94} />
      <Status $flat>2 items (1 selected)</Status>
    </Body>
  </Win>
);

const AddressDialog = () => {
  const first = useRef(null);
  useEffect(() => {
    first.current.focus();
    first.current.select();
  }, []);
  return (
    <Win $x={405} $y={423} $w={261} $h={244}>
      <WinTitle $active><h2>Address &lt;10.10.10.50/24&gt;</h2><Captions /></WinTitle>
      <DialogBody onSubmit={(e) => e.preventDefault()}>
        <Fields>
          <Field>
            <label htmlFor="address">Address:</label>
            <TextBox id="address" ref={first} defaultValue="10.10.10.50/24" />
          </Field>
          <Field>
            <label htmlFor="network">Network:</label>
            <TextBox id="network" defaultValue="10.10.10.0" />
            <Toggle type="button" aria-label="Clear network"><Up /></Toggle>
          </Field>
          <Field>
            <label htmlFor="iface">Interface:</label>
            <Choice id="iface" defaultValue="office">
              <option>office</option>
            </Choice>
            <DropGlyph><Drop /></DropGlyph>
          </Field>
        </Fields>
        <Actions>
          <Group>
            <Action $default>OK</Action>
            <Action type="button">Cancel</Action>
            <Action type="button">Apply</Action>
          </Group>
          <Group>
            {["Disable", "Comment", "Copy", "Remove"].map((a) => <Action key={a} type="button">{a}</Action>)}
          </Group>
        </Actions>
      </DialogBody>
      <DialogStatus>enabled</DialogStatus>
    </Win>
  );
};

const RouteListWindow = () => (
  <Win $x={164} $y={339} $w={656} $h={346}>
    <WinTitle><h2 /><Captions /></WinTitle>
    <Body>
      <Tabs />
      <Panel>
        <Strip>
          <Filter aria-label="Table" />
          <DropGlyph><Drop /></DropGlyph>
        </Strip>
        <ListBox $closed>
          <Grid>
            <Head cols={[["", undefined]]} />
            <tbody>
              {[0, 1, 2, 3].map((i) => <Row key={i} $selected={i === 0}><td /></Row>)}
            </tbody>
          </Grid>
          <ColumnPicker aria-label="Columns"><Down /></ColumnPicker>
        </ListBox>
        <Status $flat />
      </Panel>
    </Body>
  </Win>
);

const RouteDialog = () => (
  <Win $x={0} $y={428} $w={688} $h={432}>
    <WinTitle><h2 /><Captions /></WinTitle>
    <GatewayPane />
    <StatusRow>
      {["dynamic", "", "active", "connected"].map((s, i) => <Status key={i}>{s}</Status>)}
    </StatusRow>
  </Win>
);

export default function App() {
  return (
    <Screen>
      <Global />
      <AppTitle>
        <WinboxLogo />
        <AppName>prompt@10.10.10.50:18291 (Gurgoliat) - WinBox v6.43.7 on RB750 (mipsbe)</AppName>
        <WinControl aria-label="Minimize"><Svg s={10} crisp><path d="M0 5h10v1H0z" /></Svg></WinControl>
        <WinControl aria-label="Restore">
          <Svg s={10} crisp><path d="M.5 2.500h7v7h-7zM2.500 2.500v-2h7v7h-2" fill="none" stroke="#000" /></Svg>
        </WinControl>
        <WinControl aria-label="Close"><Svg s={10}><path d="M0 0l10 10M10 0L0 10" stroke="#000" /></Svg></WinControl>
      </AppTitle>
      <MenuBar>
        <button>Session</button>
        <button>Settings</button>
        <button>Dashboard</button>
      </MenuBar>
      <MainBar>
        <Tool aria-label="Undo">
          <Svg w={12} h={11}><path d="M1 1v5h5z" fill="#000090" /><path d="M3 4c2-3 8-3 8 1.500 0 2.500-2 4-4 4" fill="none" stroke="#000090" strokeWidth="1.200" /></Svg>
        </Tool>
        <Tool $wide aria-label="Redo">
          <Svg w={12} h={11}><path d="M11 1v5H6z" fill="#000090" /><path d="M9 4C7 1 1 1 1 5.500c0 2.500 2 4 4 4" fill="none" stroke="#000090" strokeWidth="1.200" /></Svg>
        </Tool>
        <TextTool>Safe Mode</TextTool>
        <span>Session:</span>
        <Readout $boxed>10.10.10.50:18291</Readout>
        <Spacer />
        <span>CPU:</span><Readout $min={25}>2%</Readout>
        <span>Date:</span><Readout>Jun/22/2019</Readout>
        <span>Time:</span><Readout>09:25:48</Readout>
        <LoadMeter />
        <Svg w={13} h={15}>
          <path d="M3 7V4.500a3.500 3.500 0 017 0V7" fill="none" stroke="#888" strokeWidth="2" />
          <rect x=".5" y="6.500" width="12" height="8" fill="#f5d442" stroke="#a08a2a" />
          <path d="M2 9h9M2 11.500h9" stroke="#fff0a0" />
        </Svg>
      </MainBar>
      <Work>
        <Side>
          <Brand>RouterOS WinBox</Brand>
          <SideMenu>
            {menu.map(([name, icon, sub]) => (
              <SideItem key={name}>{icons[icon]}<span>{name}</span>{sub && <Sub />}</SideItem>
            ))}
          </SideMenu>
        </Side>
        <Desk>
          <RouteDialog />
          <RouteListWindow />
          <InterfaceWindow />
          <AddressListWindow />
          <AddressDialog />
        </Desk>
      </Work>
      <Taskbar>
        <TaskButton $system aria-label="Start">
          <Svg><path d="M0 2.300L6.800 1.300V7.600H0zM7.600 1.200L16 0v7.600H7.600zM0 8.400h6.800v6.300L0 13.700zM7.600 8.400H16V16l-8.400-1.200z" fill="#fff" /></Svg>
        </TaskButton>
        <TaskButton $system aria-label="Task View">
          <Svg crisp><path d="M.5 0v3.500h10V0M.5 16v-3.500h10V16M.5 5.500h10v5H.5zM14.500 0v3.500M14.500 8v8" fill="none" stroke="#fff" /><path d="M13 4h3v3h-3z" fill="#fff" /></Svg>
        </TaskButton>
        <TaskGap />
        {apps.map(([name, state, icon]) => (
          <TaskButton key={name} aria-label={name} {...state}>{icon}</TaskButton>
        ))}
        <Spacer />
        <Tray>
          <Svg w={12} h={8}><path d="M.5 6.500L6 1l5.500 5.500" fill="none" stroke="#fff" strokeWidth="1.200" /></Svg>
          <Svg w={16} h={12}>
            <path d="M6.500 3.500h7.500v7H4.500V8" fill="none" stroke="#fff" /><path d="M7 5h6v4H6z" fill="#fff" />
            <path d="M15 5.500h1v3h-1zM1 2h5v3L4.500 6.500h-2L1 5zM2 0h1v2H2zM4 0h1v2H4zM3 6h1v3H3z" fill="#fff" />
          </Svg>
          <Svg w={14} h={12}><path d="M.5 4h2L5.500 1v10l-3-3h-2zM9 4l4 4M13 4L9 8" fill="none" stroke="#fff" /></Svg>
          <TrayText $w={30}>ENG<br />US</TrayText>
          <TrayText $w={66}>13:24<br />25.6.2019 г.</TrayText>
        </Tray>
        <Tray $end>
          <Svg w={16} h={16}><path d="M.5.500h15v11.500h-5L8 14.800 5.500 12H.5z" fill="none" stroke="#fff" strokeWidth="1.200" /></Svg>
          <ShowDesk aria-label="Show desktop" />
        </Tray>
      </Taskbar>
    </Screen>
  );
}
